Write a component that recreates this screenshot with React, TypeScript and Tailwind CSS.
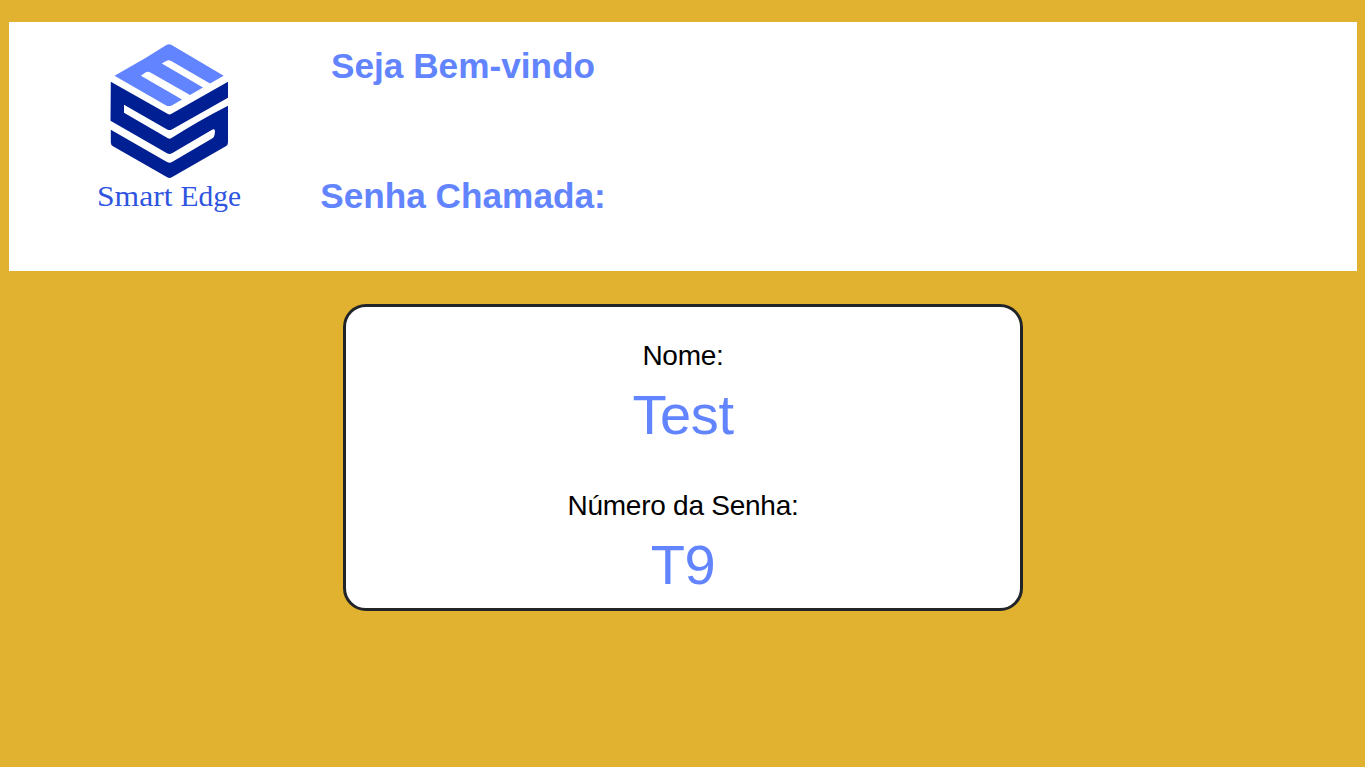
function Logo() {
  return (
    <svg className="block h-[185px] w-[160px]" viewBox="90 35 160 185" aria-label="Smart Edge">
      <path
        fill="#6285ff"
        d="M166.8 44.8Q169 43.6 171.2 44.8L223.7 75.7L210 83.5L171.2 61Q168.6 59.5 166.2 61L161.8 63.6L203 87.6L190 95L150.4 72.5Q147.8 71 145.4 72.6L140.9 75.8L182 99.5L171.8 105.4Q169 106.8 166.2 105.4L114.5 75.7L145.5 58Z"
      />
      <path
        fill="#001f93"
        d="M110.8 81.8L167.5 113.8Q169.5 115 171.5 113.8L228 81.8V97.7L171.8 129.4Q169.5 130.6 167.2 129.4L124 104.8V112.7L167.5 138.1Q169.5 139.3 171.5 138.1Q198 121 228 105.7V142.5Q228 145 225.8 146.3L171.8 177.2Q169.5 178.6 167.2 177.2L113 146.3Q110.8 145 110.8 142.5V129.8L167 162Q169.5 163.4 172 162L212.5 138.2Q214.3 137 214.6 134.5L215 131.5Q215 128.5 212.5 129.6L172 153.2Q169.5 154.7 167 153.2L110.5 120.8Z"
      />
      <g fill="#2f55e0" fontSize="30" fontFamily="'Liberation Serif', serif">
        <text x="97" y="206" textLength="75.5" lengthAdjust="spacingAndGlyphs">
          Smart
        </text>
        <text x="180.5" y="206" textLength="60.5" lengthAdjust="spacingAndGlyphs">
          Edge
        </text>
      </g>
    </svg>
  );
}

function Field({ label, value }: { label: string; value: string }) {
  return (
    <div className="flex h-[150px] flex-col items-center">
      <p className="text-[28px] leading-8 tracking-[-0.25px] text-black">{label}</p>
      <p className="mt-[11px] text-[56px] leading-16 tracking-[-0.4px] text-[#6285ff]">{value}</p>
    </div>
  );
}

export default function App() {
  return (
    <div className="min-h-screen bg-[#e0b22f] pt-[22px] pr-2 pl-[9px] font-['Liberation_Sans',Arial,sans-serif]">
      <header className="flex h-[249px] bg-white pt-[13px] pl-[81px]">
        <Logo />
        <div className="ml-[61px] flex w-[304px] flex-col items-center gap-[90px] pt-[11px] text-[35.2px] leading-10 font-bold whitespace-nowrap text-[#6285ff]">
          <h1>Seja Bem-vindo</h1>
          <h2>Senha Chamada:</h2>
        </div>
      </header>
      <main className="mx-auto mt-[33px] h-[307px] w-[680px] rounded-[23px] border-3 border-[#212529] bg-white pt-[33px]">
        <Field label="Nome:" value="Test" />
        <Field label="Número da Senha:" value="T9" />
      </main>
    </div>
  );
}
